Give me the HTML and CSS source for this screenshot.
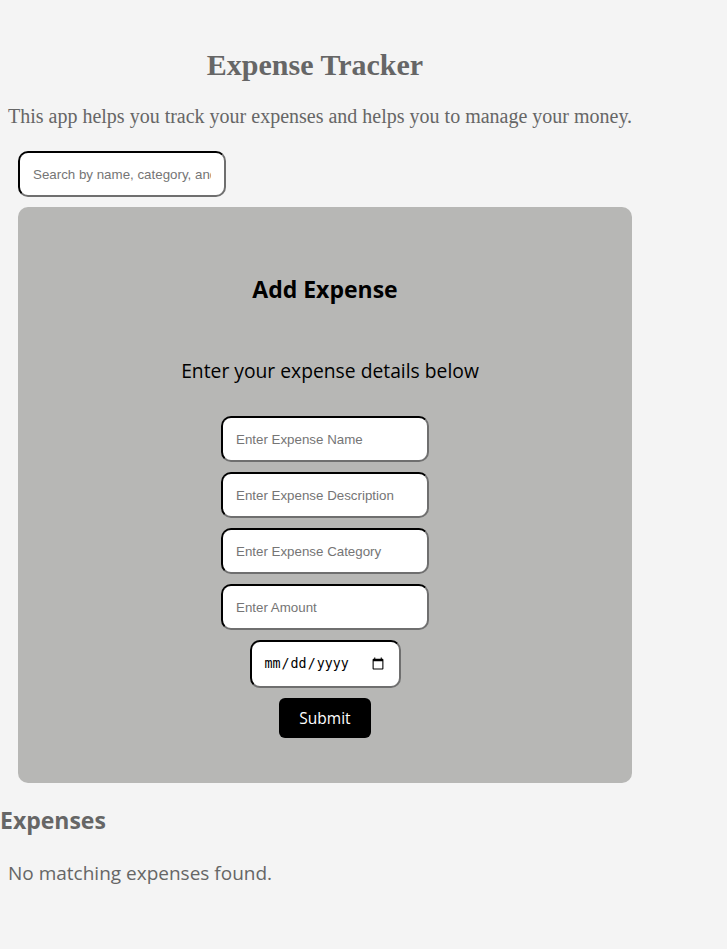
FILE: index.html
```html
<!DOCTYPE html>
<html lang="en">
<head>
<meta charset="utf-8">
<title>Expense Tracker</title>
<link rel="stylesheet" href="styles.css">
</head>
<body>
<div class="app">
  <header class="intro">
    <h1 class="title">Expense Tracker</h1>
    <p class="lead">This app helps you track your expenses and helps you to manage your money.</p>
  </header>
  <div class="search-row">
    <input class="field search" type="text" placeholder="Search by name, category, and amount">
  </div>
  <form class="card">
    <h2 class="card-title">Add Expense</h2>
    <p class="card-sub">Enter your expense details below</p>
    <div class="fields">
      <input class="field" type="text" placeholder="Enter Expense Name">
      <input class="field" type="text" placeholder="Enter Expense Description">
      <input class="field" type="text" placeholder="Enter Expense Category">
      <input class="field" type="text" placeholder="Enter Amount">
      <input class="field date" type="date">
      <button class="submit" type="button">Submit</button>
    </div>
  </form>
  <section class="list">
    <h2 class="list-title">Expenses</h2>
    <p class="empty">No matching expenses found.</p>
  </section>
</div>
</body>
</html>
```

FILE: styles.css
```css
html, body {
  margin: 0;
  padding: 0;
  background: #f4f4f4;
}

.app {
  width: 640px;
  color: #666;
}

.intro {
  width: 630px;
  padding-top: 48px;
}

.title {
  margin: 0;
  text-align: center;
  font-family: "Liberation Serif", serif;
  font-weight: bold;
  font-size: 30px;
  line-height: 34px;
  color: #666;
}

.lead {
  margin: 22px 0 0 8px;
  font-family: "Liberation Serif", serif;
  font-size: 20px;
  line-height: 24px;
  color: #666;
  white-space: nowrap;
}

.search-row {
  padding: 23px 0 0 18px;
}

.field {
  box-sizing: border-box;
  width: 208px;
  height: 46px;
  padding: 0 13px;
  border: 2px inset #333;
  border-color: #1d1d1d #6f6f6f #6f6f6f #1d1d1d;
  border-radius: 10px;
  background: #fff;
  font-family: "Liberation Sans", Arial, sans-serif;
  font-size: 13.33px;
  color: #000;
  outline: none;
}

.field::placeholder {
  color: #757575;
}

.card {
  box-sizing: border-box;
  display: flex;
  flex-direction: column;
  align-items: center;
  width: 614px;
  margin: 10px 0 0 18px;
  padding: 67px 0 45px;
  background: #b7b7b5;
  border-radius: 10px;
  color: #000;
  font-family: "Open Sans", sans-serif;
}

.card-title {
  margin: 0;
  font-size: 23px;
  line-height: 30px;
  font-weight: bold;
}

.card-sub {
  margin: 54px 0 0 10px;
  font-size: 19.3px;
  line-height: 26px;
}

.fields {
  display: flex;
  flex-direction: column;
  align-items: center;
  gap: 10px;
  margin-top: 32px;
}

.field.date {
  width: 151px;
  height: 48px;
  padding: 0 12px;
  font-family: "DejaVu Sans Mono", monospace;
  font-size: 13.33px;
}

.submit {
  width: 92px;
  height: 40px;
  border: 0;
  border-radius: 6px;
  background: #000;
  color: #fff;
  font-family: "Open Sans", sans-serif;
  font-size: 15.5px;
  padding: 0;
}

.list {
  font-family: "Open Sans", sans-serif;
  color: #666;
}

.list-title {
  margin: 22px 0 0;
  font-size: 23px;
  line-height: 30px;
  font-weight: bold;
}

.empty {
  margin: 25px 0 0 8px;
  font-size: 19px;
  line-height: 26px;
}
```
